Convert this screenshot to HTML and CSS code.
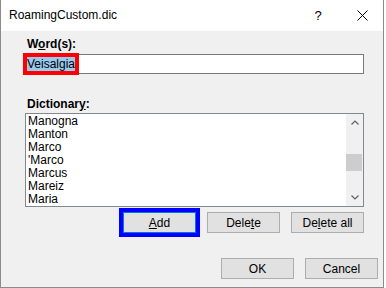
FILE: index.html
```html
<!DOCTYPE html>
<html lang="en">
<head>
    <meta charset="UTF-8">
    <title>RoamingCustom.dic</title>
    <link rel="stylesheet" href="styles.css">
</head>
<body>
    <div class="window">
        <div class="titlebar">
            <span class="title">RoamingCustom.dic</span>
            <span class="caption-btn help">?</span>
            <span class="caption-btn close">
                <svg width="11" height="11" viewBox="0 0 11 11"><path d="M0.5 0.5L10.5 10.5M10.5 0.5L0.5 10.5" stroke="#000" stroke-width="1" fill="none"/></svg>
            </span>
        </div>

        <div class="content">
            <label class="field-label">W<u>o</u>rd(s):</label>
            <div class="textbox"><span class="selected marked-red">Veisalgia</span></div>

            <label class="field-label dict-label">Dictionar<u>y</u>:</label>
            <div class="listbox">
                <ul class="items">
                    <li>Manogna</li>
                    <li>Manton</li>
                    <li>Marco</li>
                    <li>'Marco</li>
                    <li>Marcus</li>
                    <li>Mareiz</li>
                    <li>Maria</li>
                </ul>
                <div class="scrollbar">
                    <div class="arrow">
                        <svg width="8" height="5" viewBox="0 0 8 5"><path d="M0.5 4.5L4 1L7.5 4.5" stroke="#606060" stroke-width="1.2" fill="none"/></svg>
                    </div>
                    <div class="track"><div class="thumb"></div></div>
                    <div class="arrow">
                        <svg width="8" height="5" viewBox="0 0 8 5"><path d="M0.5 0.5L4 4L7.5 0.5" stroke="#606060" stroke-width="1.2" fill="none"/></svg>
                    </div>
                </div>
            </div>

            <div class="list-actions">
                <button type="button" class="btn default marked-blue"><u>A</u>dd</button>
                <button type="button" class="btn">Dele<u>t</u>e</button>
                <button type="button" class="btn">De<u>l</u>ete all</button>
            </div>
        </div>

        <div class="footer">
            <button type="button" class="btn">OK</button>
            <button type="button" class="btn">Cancel</button>
        </div>
    </div>
</body>
</html>
```

FILE: styles.css
```css
body {
    margin: 0;
    background-color: #ffffff;
    font-family: "Segoe UI", "Liberation Sans", Arial, sans-serif;
    font-size: 12px;
    color: #000000;
}
.window {
    width: 384px;
    height: 288px;
    box-sizing: border-box;
    border: 1px solid #8c8c8c;
    border-top: none;
    background-color: #f0f0f0;
}
.titlebar {
    display: flex;
    align-items: center;
    height: 31px;
    background-color: #ffffff;
    padding-left: 8px;
}
.title {
    flex: 1;
    line-height: 15px;
}
.caption-btn {
    display: flex;
    align-items: center;
    justify-content: center;
    height: 31px;
}
.help {
    width: 46px;
    font-size: 13px;
}
.close {
    width: 42px;
}
.content {
    padding: 6px 19px 0 24px;
}
.field-label {
    display: block;
    font-weight: bold;
    line-height: 15px;
    padding-left: 2px;
}
.textbox {
    display: flex;
    align-items: center;
    height: 20px;
    margin-top: 2px;
    box-sizing: border-box;
    border: 1px solid #7a7a7a;
    background-color: #ffffff;
}
.selected {
    margin-left: 1px;
    line-height: 14px;
    background-color: #99c9ef;
}
.marked-red {
    outline: 4px solid #ff0000;
}
.dict-label {
    margin-top: 23px;
    margin-bottom: 1px;
}
.listbox {
    display: flex;
    height: 94px;
    box-sizing: border-box;
    border: 1px solid #828790;
    background-color: #ffffff;
}
.items {
    flex: 1;
    list-style: none;
    margin: 0;
    padding: 1px 0 0 2px;
    line-height: 13px;
}
.scrollbar {
    display: flex;
    flex-direction: column;
    width: 17px;
    background-color: #f0f0f0;
}
.arrow {
    display: flex;
    align-items: center;
    justify-content: center;
    height: 17px;
}
.track {
    flex: 1;
}
.thumb {
    height: 17px;
    margin: 23px 1px 0 0;
    background-color: #cdcdcd;
}
.list-actions {
    display: flex;
    justify-content: flex-end;
    gap: 11px;
    margin-top: 5px;
}
.footer {
    display: flex;
    justify-content: flex-end;
    gap: 11px;
    margin-top: 25px;
    padding-right: 5px;
}
.btn {
    width: 73px;
    height: 21px;
    padding: 0;
    font-family: inherit;
    font-size: 12px;
    color: #000000;
    background-color: #e1e1e1;
    border: 1px solid #adadad;
}
.btn.default {
    border-color: #0078d7;
}
.marked-blue {
    outline: 4px solid #0000ff;
}
```
